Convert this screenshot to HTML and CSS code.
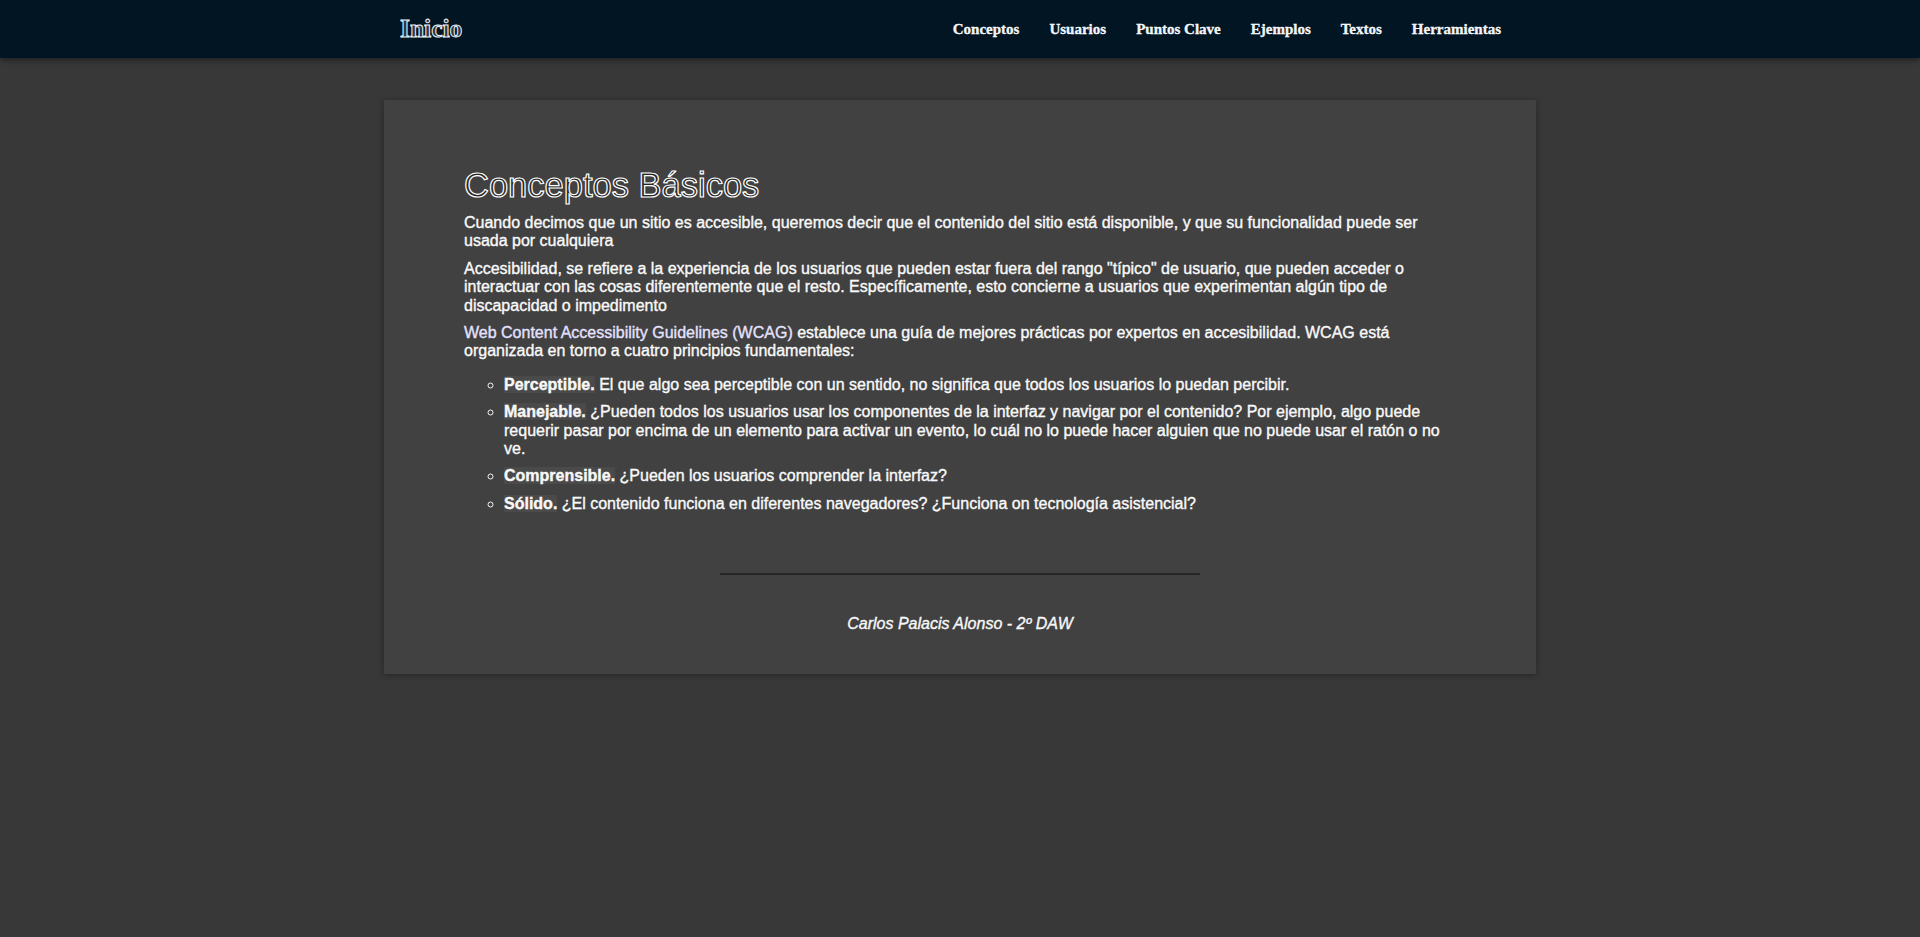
FILE: index.html
```html
<!DOCTYPE html>
<html lang="es">
<head>
<meta charset="utf-8">
<title>Conceptos Básicos</title>
<link rel="stylesheet" href="styles.css">
</head>
<body>
<header class="topbar">
  <div class="topbar-inner">
    <a class="brand" href="#">Inicio</a>
    <nav class="menu">
      <a href="#">Conceptos</a>
      <a href="#">Usuarios</a>
      <a href="#">Puntos Clave</a>
      <a href="#">Ejemplos</a>
      <a href="#">Textos</a>
      <a href="#">Herramientas</a>
    </nav>
  </div>
</header>
<main class="card">
  <section class="content">
    <h1>Conceptos Básicos</h1>
    <p>Cuando decimos que un sitio es accesible, queremos decir que el contenido del sitio está disponible, y que su funcionalidad puede ser usada por cualquiera</p>
    <p>Accesibilidad, se refiere a la experiencia de los usuarios que pueden estar fuera del rango "típico" de usuario, que pueden acceder o interactuar con las cosas diferentemente que el resto. Específicamente, esto concierne a usuarios que experimentan algún tipo de discapacidad o impedimento</p>
    <p><a class="ref" href="#">Web Content Accessibility Guidelines (WCAG)</a> establece una guía de mejores prácticas por expertos en accesibilidad. WCAG está organizada en torno a cuatro principios fundamentales:</p>
    <ul class="principles">
      <li><strong>Perceptible.</strong> El que algo sea perceptible con un sentido, no significa que todos los usuarios lo puedan percibir.</li>
      <li><strong>Manejable.</strong> ¿Pueden todos los usuarios usar los componentes de la interfaz y navigar por el contenido? Por ejemplo, algo puede requerir pasar por encima de un elemento para activar un evento, lo cuál no lo puede hacer alguien que no puede usar el ratón o no ve.</li>
      <li><strong>Comprensible.</strong> ¿Pueden los usuarios comprender la interfaz?</li>
      <li><strong>Sólido.</strong> ¿El contenido funciona en diferentes navegadores? ¿Funciona on tecnología asistencial?</li>
    </ul>
  </section>
  <footer class="foot">
    <hr class="rule">
    <p class="author">Carlos Palacis Alonso - 2º DAW</p>
  </footer>
</main>
</body>
</html>
```
FILE: styles.css
```css
html, body {
  margin: 0;
  padding: 0;
}
body {
  background: #383838;
  font-family: "Liberation Sans", Arial, sans-serif;
  color: #f4f4f4;
  min-height: 937px;
}
.topbar {
  background: #011522;
  height: 58px;
  box-shadow: 0 2px 6px rgba(0,0,0,0.45);
}
.topbar-inner {
  width: 1152px;
  margin: 0 auto;
  height: 58px;
  padding: 0 20px 0 16px;
  box-sizing: border-box;
  display: flex;
  align-items: center;
  justify-content: space-between;
}
.brand {
  font-family: "Liberation Serif", "Times New Roman", serif;
  font-weight: bold;
  font-size: 25.5px;
  color: #2a3540;
  -webkit-text-stroke: 1px #eef4fa;
  text-decoration: none;
}
.menu {
  display: flex;
}
.menu a {
  font-family: "Liberation Serif", "Times New Roman", serif;
  font-weight: bold;
  font-size: 15px;
  color: #eef4fb;
  -webkit-text-stroke: 0.3px #ffffff;
  text-decoration: none;
  padding: 0 15px;
}
.card {
  width: 1152px;
  margin: 42px auto 0;
  background: #414141;
  box-shadow: 0 1px 6px rgba(0,0,0,0.35);
  box-sizing: border-box;
}
.content {
  padding: 66px 80px 0;
}
h1 {
  font-weight: normal;
  font-size: 34.5px;
  margin: 0 0 9px;
  color: #262626;
  -webkit-text-stroke: 1.2px #ffffff;
}
.content p {
  font-size: 16px;
  line-height: 18.4px;
  margin: 0 0 9px;
  color: #f6f6f6;
  -webkit-text-stroke: 0.35px #ffffff;
}
.ref {
  color: #e4e0ff;
  -webkit-text-stroke: 0.35px #e8e4ff;
  text-decoration: none;
}
.principles {
  list-style-type: circle;
  margin: 15px 0 0;
  padding-left: 40px;
}
.principles li {
  font-size: 16px;
  line-height: 18.4px;
  margin-bottom: 9px;
  color: #f6f6f6;
  -webkit-text-stroke: 0.35px #ffffff;
}
.principles strong {
  background: #4a4a4a;
}
.foot {
  padding: 51px 0 40px;
  text-align: center;
}
.rule {
  width: 480px;
  margin: 0 auto;
  border: 0;
  border-top: 2px solid #262626;
}
.author {
  margin: 40px 0 0;
  font-style: italic;
  font-size: 16px;
  line-height: 18.4px;
  color: #f4f4f4;
  -webkit-text-stroke: 0.35px #ffffff;
}
```
